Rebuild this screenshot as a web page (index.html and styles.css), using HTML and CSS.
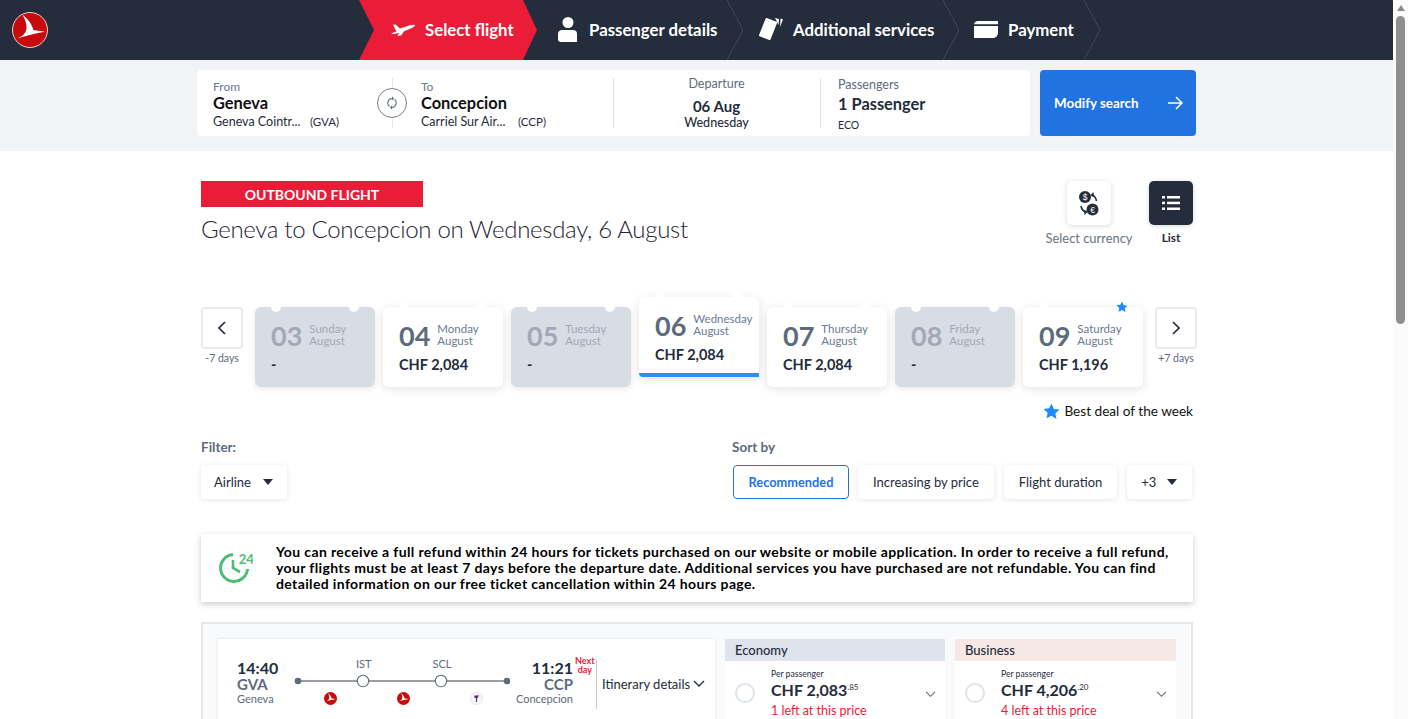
FILE: index.html
```html
<!DOCTYPE html>
<html lang="en">
<head>
  <meta charset="UTF-8" />
  <title>Select flight</title>
  <link rel="stylesheet" href="styles.css">
</head>
<body>
<div class="page">
  <div class="content">

    <header class="topbar">
      <div class="logo">
        <svg width="36" height="36" viewBox="0 0 36 36">
          <circle cx="18" cy="18" r="17.500" fill="#c70a0c" stroke="#d9d9d9"/>
          <path d="M10.700 3C16 7 20 12 21.300 18L33 19.700C26 21 16 23 5.300 26.500C11 24 14 21 14.500 16C14.800 12 13 7 10.700 3z" fill="#fff"/>
        </svg>
      </div>
      <nav class="steps">
        <div class="step step-active">
          <svg width="24" height="12" viewBox="0 0 24 12"><path d="M2 .8L4.500 .5L9 4.500L18 1.500C20.500 .7 24 .5 24 1.500C24 2.500 21 4 18 5.200L13 7.200L10 11.500L6.500 12L8 8.800C5 9.800 2 10.300 0 10L2.500 8.500L5.500 7.500z" fill="#fff"/></svg>
          <span>Select flight</span>
        </div>
        <div class="step step-2">
          <svg width="19" height="25" viewBox="0 0 19 25"><circle cx="10" cy="5.500" r="5.500" fill="#fff"/><path d="M4 13h11c2 0 4 1 4 3.500V25H3c-2 0-3-1-3-3v-5c0-3 2-4 4-4z" fill="#fff"/></svg>
          <span>Passenger details</span>
        </div>
        <div class="step step-3">
          <svg width="24" height="25" viewBox="0 0 24 25"><path d="M7.500 2L17 5.800L10.700 22L1 18.300z" fill="#fff" stroke="#fff" stroke-width="2" stroke-linejoin="round"/><path d="M16 1L20 2L19.500 8zM21.500 1.500L24 2.500L21 10z" fill="#fff"/></svg>
          <span>Additional services</span>
        </div>
        <div class="step step-4">
          <svg width="24" height="17" viewBox="0 0 24 17"><path d="M4 0h20v3.300H0C0 1.500 2 0 4 0zM0 5h24v6.500c0 3-2 5.500-5 5.500H0z" fill="#fff"/></svg>
          <span>Payment</span>
        </div>
      </nav>
    </header>

    <section class="search-band">
      <div class="search-card">
        <div class="search-col col-from">
          <div class="label">From</div>
          <div class="city">Geneva</div>
          <div class="airport"><span class="airport-name">Geneva Cointr...</span><span class="airport-code">(GVA)</span></div>
          <div class="swap">
            <svg width="10" height="14" viewBox="0 0 10 14" fill="none" stroke="#5d6b7d" stroke-width="1.100"><path d="M5 2.500A4.500 4.500 0 0 0 2.500 10.500M5 11.500A4.500 4.500 0 0 0 7.500 3.500"/><path d="M5 .5v4l2-2zM5 9.500v4l-2-2z" fill="#5d6b7d" stroke="none"/></svg>
          </div>
        </div>
        <div class="search-col col-to">
          <div class="label">To</div>
          <div class="city">Concepcion</div>
          <div class="airport"><span class="airport-name">Carriel Sur Air...</span><span class="airport-code">(CCP)</span></div>
        </div>
        <div class="search-col col-date">
          <div class="label-grey">Departure</div>
          <div class="date">06 Aug</div>
          <div class="weekday">Wednesday</div>
        </div>
        <div class="search-col col-pax">
          <div class="label-grey">Passengers</div>
          <div class="pax">1 Passenger</div>
          <div class="cabin">ECO</div>
        </div>
      </div>
      <a class="modify-btn">
        <span>Modify search</span>
        <svg width="16" height="14" viewBox="0 0 16 14" fill="none" stroke="#fff" stroke-width="1.500"><path d="M1 7h14M9 1l6 6-6 6"/></svg>
      </a>
    </section>

    <main class="main">
      <div class="heading-row">
        <div>
          <div class="badge">OUTBOUND FLIGHT</div>
          <h1>Geneva to Concepcion on Wednesday, 6 August</h1>
        </div>
        <div class="view-tools">
          <div class="tool tool-currency">
            <div class="tool-box">
              <svg width="20" height="25" viewBox="0 0 20 25">
                <circle cx="6" cy="6" r="6" fill="#252c3b"/>
                <circle cx="13.500" cy="18.500" r="6" fill="#252c3b"/>
                <text x="6" y="9" font-size="8.500" fill="#fff" text-anchor="middle" font-family="Liberation Sans">$</text>
                <text x="13.500" y="21.500" font-size="8.500" fill="#fff" text-anchor="middle" font-family="Liberation Sans">€</text>
                <path d="M13 4Q16.500 5 17.500 10M7 21Q3 20 2 15" fill="none" stroke="#252c3b" stroke-width="1.600"/>
                <path d="M14.500 1L11 4.500L15 6zM5.500 24L9 20.500L5 19z" fill="#252c3b"/>
              </svg>
            </div>
            <span>Select currency</span>
          </div>
          <div class="tool tool-list">
            <div class="tool-box dark">
              <svg width="18" height="16" viewBox="0 0 18 16" fill="#fff">
                <rect x="0" y="1" width="3" height="2.500"/><rect x="5" y="1" width="13" height="2.500"/>
                <rect x="0" y="6.700" width="3" height="2.500"/><rect x="5" y="6.700" width="13" height="2.500"/>
                <rect x="0" y="12.500" width="3" height="2.500"/><rect x="5" y="12.500" width="13" height="2.500"/>
              </svg>
            </div>
            <span>List</span>
          </div>
        </div>
      </div>

      <div class="calendar">
        <div class="cal-nav">
          <div class="cal-arrow"><svg width="10" height="14" viewBox="0 0 10 14" fill="none" stroke="#252c3b" stroke-width="1.700"><path d="M8 1L2 7l6 6"/></svg></div>
          <span>-7 days</span>
        </div>
        <div class="day off"><i class="hole h1"></i><i class="hole h2"></i>
          <div class="day-top"><b>03</b><div class="day-name">Sunday<br>August</div></div><div class="price">-</div></div>
        <div class="day"><i class="hole h1"></i><i class="hole h2"></i>
          <div class="day-top"><b>04</b><div class="day-name">Monday<br>August</div></div><div class="price">CHF 2,084</div></div>
        <div class="day off"><i class="hole h1"></i><i class="hole h2"></i>
          <div class="day-top"><b>05</b><div class="day-name">Tuesday<br>August</div></div><div class="price">-</div></div>
        <div class="day active"><i class="hole h1"></i><i class="hole h2"></i>
          <div class="day-top"><b>06</b><div class="day-name">Wednesday<br>August</div></div><div class="price">CHF 2,084</div></div>
        <div class="day"><i class="hole h1"></i><i class="hole h2"></i>
          <div class="day-top"><b>07</b><div class="day-name">Thursday<br>August</div></div><div class="price">CHF 2,084</div></div>
        <div class="day off"><i class="hole h1"></i><i class="hole h2"></i>
          <div class="day-top"><b>08</b><div class="day-name">Friday<br>August</div></div><div class="price">-</div></div>
        <div class="day"><i class="hole h1"></i>
          <svg class="day-star" width="12" height="12" viewBox="0 0 24 24"><path d="M12 1l3.400 7.300 7.900 1-5.800 5.500 1.500 7.900L12 18l-7 3.700 1.500-7.900L.7 8.300l7.900-1z" fill="#1a8cff"/></svg>
          <div class="day-top"><b>09</b><div class="day-name">Saturday<br>August</div></div><div class="price">CHF 1,196</div></div>
        <div class="cal-nav next">
          <div class="cal-arrow"><svg width="10" height="14" viewBox="0 0 10 14" fill="none" stroke="#252c3b" stroke-width="1.700"><path d="M2 1l6 6-6 6"/></svg></div>
          <span>+7 days</span>
        </div>
      </div>

      <div class="best-deal">
        <svg width="17" height="17" viewBox="0 0 24 24"><path d="M12 1l3.400 7.300 7.900 1-5.800 5.500 1.500 7.900L12 18l-7 3.700 1.500-7.900L.7 8.300l7.900-1z" fill="#1a8cff"/></svg>
        <span>Best deal of the week</span>
      </div>

      <div class="filter-row">
        <div class="filter-group">
          <div class="group-label">Filter:</div>
          <div class="pill-row">
            <div class="pill pill-airline">Airline <i class="caret"></i></div>
          </div>
        </div>
        <div class="filter-group">
          <div class="group-label">Sort by</div>
          <div class="pill-row">
            <div class="pill pill-on">Recommended</div>
            <div class="pill">Increasing by price</div>
            <div class="pill">Flight duration</div>
            <div class="pill pill-more">+3 <i class="caret"></i></div>
          </div>
        </div>
      </div>

      <div class="notice">
        <svg width="34" height="32" viewBox="0 0 34 32" fill="none">
          <path d="M14 2.500A13.500 13.500 0 1 0 28.500 17" stroke="#4dbd74" stroke-width="3"/>
          <path d="M14 8v8l7 4" stroke="#4dbd74" stroke-width="2.600"/>
          <text x="19.700" y="11.500" font-size="13" font-weight="700" fill="#4dbd74" font-family="Lato">24</text>
        </svg>
        <p>You can receive a full refund within 24 hours for tickets purchased on our website or mobile application. In order to receive a full refund, your flights must be at least 7 days before the departure date. Additional services you have purchased are not refundable. You can find detailed information on our free ticket cancellation within 24 hours page.</p>
      </div>

      <div class="results">
        <div class="flight">
          <div class="end">
            <div class="time">14:40</div>
            <div class="code">GVA</div>
            <div class="place">Geneva</div>
          </div>
          <div class="route">
            <div class="stops"><span>IST</span><span>SCL</span></div>
            <svg class="route-line" width="216" height="20" viewBox="0 0 216 20">
              <path d="M4 10h209" stroke="#7a7f87" stroke-width="1.300"/>
              <circle cx="4" cy="10" r="3.300" fill="#5d6b7d"/>
              <circle cx="213" cy="10" r="3.300" fill="#5d6b7d"/>
              <circle cx="69" cy="10" r="5.700" fill="#fff" stroke="#5d6b7d" stroke-width="1.100"/>
              <circle cx="147" cy="10" r="5.700" fill="#fff" stroke="#5d6b7d" stroke-width="1.100"/>
            </svg>
            <div class="carriers">
              <svg width="13" height="13" viewBox="0 0 36 36"><circle cx="18" cy="18" r="18" fill="#c70a0c"/><path d="M10.700 3C16 7 20 12 21.300 18L33 19.700C26 21 16 23 5.300 26.500C11 24 14 21 14.500 16C14.800 12 13 7 10.700 3z" fill="#fff"/></svg>
              <svg width="13" height="13" viewBox="0 0 36 36"><circle cx="18" cy="18" r="18" fill="#c70a0c"/><path d="M10.700 3C16 7 20 12 21.300 18L33 19.700C26 21 16 23 5.300 26.500C11 24 14 21 14.500 16C14.800 12 13 7 10.700 3z" fill="#fff"/></svg>
              <svg width="13" height="13" viewBox="0 0 36 36"><circle cx="18" cy="18" r="17" fill="#f7f5f8" stroke="#e3e0e6" stroke-width="2"/><path d="M12 10h12l-4 8-1 10h-3l1-11-5-1z" fill="#4b2a8c"/><path d="M19 10h6l-4 6z" fill="#e4173a"/></svg>
            </div>
          </div>
          <div class="end end-right">
            <div class="time-row"><div class="time">11:21</div><div class="next-day">Next<br>day</div></div>
            <div class="code">CCP</div>
            <div class="place">Concepcion</div>
          </div>
          <div class="itinerary">
            <span>Itinerary details</span>
            <svg width="12" height="8" viewBox="0 0 12 8" fill="none" stroke="#252c3b" stroke-width="1.300"><path d="M1 1l5 5 5-5"/></svg>
          </div>
        </div>

        <div class="fare">
          <div class="fare-head economy">Economy</div>
          <div class="fare-body">
            <i class="radio"></i>
            <div class="fare-info">
              <div class="per">Per passenger</div>
              <div class="amount">CHF 2,083<sup>.85</sup></div>
              <div class="left">1 left at this price</div>
            </div>
            <svg class="fare-chevron" width="11" height="7" viewBox="0 0 12 8" fill="none" stroke="#5d6b7d" stroke-width="1.200"><path d="M1 1l5 5 5-5"/></svg>
          </div>
        </div>
        <div class="fare fare-wide">
          <div class="fare-head business">Business</div>
          <div class="fare-body">
            <i class="radio"></i>
            <div class="fare-info">
              <div class="per">Per passenger</div>
              <div class="amount">CHF 4,206<sup>.20</sup></div>
              <div class="left">4 left at this price</div>
            </div>
            <svg class="fare-chevron" width="11" height="7" viewBox="0 0 12 8" fill="none" stroke="#5d6b7d" stroke-width="1.200"><path d="M1 1l5 5 5-5"/></svg>
          </div>
        </div>
      </div>
    </main>
  </div>

  <aside class="scrollbar">
    <i class="scroll-up"></i>
    <div class="scroll-thumb"></div>
  </aside>
</div>
</body>
</html>
```

FILE: styles.css
```css
* {
  box-sizing: border-box;
}
html, body {
  margin: 0;
  padding: 0;
  height: 719px;
  overflow: hidden;
}
body {
  font-family: "Lato", "Noto Sans", sans-serif;
  color: #252c3b;
  background: #fff;
}
.page {
  display: flex;
  height: 719px;
  overflow: hidden;
}
.content {
  width: 1393px;
  flex: none;
}

/* top bar */
.topbar {
  height: 60px;
  background: #252c3b;
  display: flex;
}
.logo {
  width: 359px;
  padding: 12px 0 0 12px;
}
.steps {
  display: flex;
  height: 60px;
}
.step {
  position: relative;
  display: flex;
  align-items: center;
  height: 60px;
  padding-bottom: 1px;
  color: #fff;
  font-size: 16.800px;
  font-weight: 700;
  white-space: nowrap;
}
.step::after {
  content: "";
  position: absolute;
  top: 0;
  right: -16px;
  width: 16px;
  height: 60px;
  background:
    linear-gradient(to top right, transparent calc(50% - .6px), #4a5263 50%, transparent calc(50% + .6px)) top / 100% 50% no-repeat,
    linear-gradient(to bottom right, transparent calc(50% - .6px), #4a5263 50%, transparent calc(50% + .6px)) bottom / 100% 50% no-repeat;
}
.step-active {
  width: 164px;
  padding-left: 32px;
  gap: 10px;
  background: #eb1c37;
}
.step-active::before {
  content: "";
  position: absolute;
  left: 0;
  top: 0;
  border-left: 15px solid #252c3b;
  border-top: 30px solid transparent;
  border-bottom: 30px solid transparent;
}
.step-active::after {
  background: #eb1c37;
  clip-path: polygon(0 0, 100% 50%, 0 100%);
  right: -14px;
  width: 14px;
}
.step-2 {
  width: 204px;
  padding-left: 35px;
  gap: 12px;
}
.step-3 {
  width: 216px;
  padding-left: 32px;
  gap: 10px;
}
.step-4 {
  width: 141px;
  padding-left: 31px;
  gap: 10px;
}

/* search summary */
.search-band {
  height: 91px;
  background: #f2f3f7;
  padding: 10px 0 0 197px;
  display: flex;
  gap: 10px;
  align-items: flex-start;
}
.search-card {
  width: 833px;
  height: 66px;
  background: #fff;
  border-radius: 4px;
  display: flex;
}
.search-col {
  position: relative;
  height: 66px;
  flex: none;
}
.col-from {
  width: 208px;
  padding: 10px 0 0 16px;
}
.col-from::after {
  content: "";
  position: absolute;
  left: 195px;
  top: 8px;
  bottom: 8px;
  border-left: 1px solid #e4e6ea;
}
.col-to {
  width: 208px;
  padding: 10px 0 0 16px;
}
.col-date {
  width: 207px;
  text-align: center;
  padding-top: 6px;
}
.col-date::before, .col-pax::before {
  content: "";
  position: absolute;
  left: 0;
  top: 8px;
  bottom: 8px;
  border-left: 1px solid #dfe1e6;
}
.col-pax {
  width: 210px;
  padding: 7px 0 0 18px;
}
.label {
  font-size: 12px;
  line-height: 13px;
  color: #6b7a90;
}
.city {
  font-size: 16.400px;
  line-height: 20px;
  font-weight: 700;
  color: #111;
}
.airport {
  display: flex;
  margin-top: 1px;
  font-size: 12.500px;
  line-height: 16px;
  color: #252c3b;
}
.airport-name {
  width: 97px;
  white-space: nowrap;
}
.airport-code {
  font-size: 11.500px;
}
.swap {
  position: absolute;
  z-index: 1;
  left: 180px;
  top: 18px;
  width: 30px;
  height: 30px;
  border: 1px solid #77808e;
  border-radius: 50%;
  background: #fff;
  display: flex;
  align-items: center;
  justify-content: center;
}
.label-grey {
  font-size: 12.500px;
  line-height: 16px;
  color: #5d6b7d;
}
.date {
  margin-top: 6px;
  font-size: 15px;
  line-height: 17px;
  font-weight: 700;
}
.weekday {
  font-size: 12.500px;
  line-height: 15px;
  font-weight: 500;
}
.pax {
  margin-top: 1px;
  font-size: 16.400px;
  line-height: 20px;
  font-weight: 700;
}
.cabin {
  margin-top: 4px;
  font-size: 10.500px;
  line-height: 14px;
}
.modify-btn {
  width: 156px;
  height: 66px;
  background: #2273e2;
  border-radius: 4px;
  color: #fff;
  font-size: 13.400px;
  font-weight: 700;
  display: flex;
  align-items: center;
  justify-content: space-between;
  padding: 0 13px 0 14px;
}

/* main column */
.main {
  width: 992px;
  margin-left: 201px;
  padding-top: 30px;
}
.heading-row {
  display: flex;
  justify-content: space-between;
  height: 126px;
}
.badge {
  width: 222px;
  height: 26px;
  line-height: 27px;
  background: #eb1c37;
  color: #fff;
  font-size: 14px;
  font-weight: 700;
  text-align: center;
}
h1 {
  margin: 6px 0 0;
  font-size: 24px;
  line-height: 32px;
  font-weight: 300;
  letter-spacing: -.3px;
  color: #1d2433;
}
.view-tools {
  position: relative;
  display: flex;
  height: 70px;
  width: 126px;
  justify-content: space-between;
}
.tool {
  width: 44px;
  font-size: 12.900px;
  color: #6b7380;
  display: flex;
  flex-direction: column;
  align-items: center;
  white-space: nowrap;
  gap: 5px;
}
.tool-list {
  color: #252c3b;
  font-weight: 700;
  font-size: 11.800px;
}
.tool-box {
  width: 44px;
  height: 44px;
  background: #fff;
  border-radius: 5px;
  box-shadow: 0 1px 5px rgba(37, 44, 59, .18);
  display: flex;
  align-items: center;
  justify-content: center;
  flex: none;
}
.tool-box.dark {
  background: #252c3b;
}

/* date strip */
.calendar {
  display: flex;
  gap: 8px;
  height: 90px;
  align-items: flex-start;
}
.cal-nav {
  width: 42px;
  margin-right: 4px;
  font-size: 10.500px;
  color: #5d6b7d;
  text-align: center;
  white-space: nowrap;
}
.cal-nav.next {
  margin: 0 0 0 4px;
}
.cal-arrow {
  width: 42px;
  height: 42px;
  border: 2px solid #e8eaf0;
  border-radius: 4px;
  display: flex;
  align-items: center;
  justify-content: center;
  margin-bottom: 3px;
}
.day {
  position: relative;
  width: 120px;
  height: 80px;
  background: #fff;
  border-radius: 6px;
  box-shadow: 0 2px 8px rgba(37, 44, 59, .14);
  padding: 13px 16px 0;
  flex: none;
}
.day.off {
  background: #d8dce5;
  box-shadow: 0 2px 6px rgba(37, 44, 59, .1);
}
.day.active {
  transform: translateY(-10px);
  border-radius: 6px 6px 0 4px;
  border-bottom: 4px solid #2d8cff;
}
.hole {
  position: absolute;
  top: -5px;
  width: 10px;
  height: 10px;
  background: #fff;
  border-radius: 50%;
}
.h1 {
  left: 16px;
}
.h2 {
  left: 94px;
}
.day-star {
  position: absolute;
  top: -6px;
  left: 93px;
}
.day-top {
  display: flex;
  align-items: center;
  gap: 7px;
  height: 30px;
  white-space: nowrap;
}
.day-top b {
  font-size: 27px;
  font-weight: 700;
  color: #5d6b7d;
}
.day-name {
  font-size: 11.500px;
  line-height: 12px;
  color: #6b7a90;
}
.day.off b, .day.off .day-name {
  color: #a2a9b4;
}
.price {
  margin-top: 5px;
  font-size: 14.500px;
  line-height: 20px;
  font-weight: 700;
}

.best-deal {
  display: flex;
  justify-content: flex-end;
  align-items: center;
  gap: 4px;
  font-size: 13.600px;
  height: 20px;
  color: #111;
  margin-top: 4px;
}

/* filters */
.filter-row {
  display: flex;
  margin-top: 17px;
}
.filter-group:first-child {
  width: 531px;
}
.group-label {
  font-size: 13.500px;
  line-height: 18px;
  font-weight: 700;
  color: #5d6b7d;
  margin-bottom: 9px;
}
.pill-row {
  display: flex;
  gap: 10px;
}
.pill {
  height: 34px;
  padding: 0 15px;
  background: #fff;
  border-radius: 4px;
  box-shadow: 0 1px 5px rgba(37, 44, 59, .12);
  font-size: 13px;
  display: flex;
  align-items: center;
  white-space: nowrap;
}
.pill-airline {
  width: 86px;
  padding: 0 14px 0 13px;
  justify-content: space-between;
}
.pill-on {
  width: 116px;
  margin-left: 1px;
  margin-right: -1px;
  justify-content: center;
  padding: 0;
  border: 1px solid #2273e2;
  color: #2273e2;
  box-shadow: none;
  font-weight: 700;
  font-size: 12.800px;
}
.pill-more {
  width: 65px;
  justify-content: space-between;
  padding: 0 15px 0 14px;
}
.caret {
  width: 0;
  height: 0;
  border-left: 5.500px solid transparent;
  border-right: 5.500px solid transparent;
  border-top: 6px solid #252c3b;
}

/* refund notice */
.notice {
  margin-top: 35px;
  height: 68px;
  display: flex;
  align-items: center;
  gap: 23px;
  padding: 0 20px 0 18px;
  background: #fff;
  box-shadow: 0 2px 6px rgba(37, 44, 59, .25);
}
.notice svg {
  flex: none;
}
.notice p {
  margin: 0;
  font-size: 14px;
  letter-spacing: .37px;
  line-height: 16px;
  font-weight: 700;
  color: #000;
}

/* flight result */
.results {
  margin-top: 20px;
  height: 120px;
  background: #f9fafc;
  border: 2px solid #e5e7ea;
  padding: 15px 15px 0;
  display: flex;
  gap: 10px;
  align-items: flex-start;
}
.flight {
  width: 497px;
  height: 100px;
  background: #fff;
  box-shadow: 0 0 3px rgba(37, 44, 59, .12);
  display: flex;
  padding: 20px 0 0 19px;
  position: relative;
}
.end {
  width: 57px;
  flex: none;
}
.end-right {
  width: 78px;
  text-align: right;
  padding-right: 20px;
  position: relative;
}
.time {
  font-size: 16px;
  line-height: 17px;
  font-weight: 700;
}
.time-row {
  display: flex;
  justify-content: flex-end;
}
.next-day {
  position: absolute;
  left: 60px;
  top: -3px;
  font-size: 9px;
  line-height: 9px;
  font-weight: 700;
  color: #eb1c37;
  text-align: center;
}
.code {
  font-size: 15px;
  line-height: 16px;
  font-weight: 700;
  color: #5d6b7d;
}
.place {
  font-size: 11px;
  line-height: 14px;
  color: #5d6b7d;
}
.route {
  width: 221px;
  flex: none;
  margin: -2px 0 0;
}
.stops {
  display: flex;
  font-size: 11px;
  line-height: 14px;
  color: #5d6b7d;
  padding-left: 62px;
  gap: 61px;
}
.route-line {
  display: block;
  margin: 0;
}
.carriers {
  display: flex;
  gap: 60px;
  padding-left: 30px;
  margin-top: 1px;
}
.itinerary {
  position: absolute;
  left: 378px;
  top: 20px;
  height: 50px;
  width: 119px;
  border-left: 1px solid #c9ccd2;
  padding-left: 5px;
  display: flex;
  align-items: center;
  gap: 3px;
  font-size: 13px;
  white-space: nowrap;
}

/* fare columns */
.fare {
  width: 220px;
  flex: none;
}
.fare-wide {
  width: 221px;
}
.fare-head {
  height: 22px;
  line-height: 22px;
  padding-left: 10px;
  font-size: 13px;
  font-weight: 500;
}
.economy {
  background: #dfe3ec;
}
.business {
  background: #f6e8e4;
}
.fare-body {
  height: 78px;
  background: #fff;
  position: relative;
  display: flex;
  padding: 8px 0 0 10px;
}
.radio {
  width: 20px;
  height: 20px;
  border: 2px solid #dfe3ec;
  border-radius: 50%;
  margin-top: 14px;
  flex: none;
}
.fare-info {
  margin-left: 16px;
}
.per {
  font-size: 8.600px;
  line-height: 11px;
  color: #252c3b;
}
.amount {
  font-size: 16px;
  line-height: 20px;
  font-weight: 700;
  white-space: nowrap;
}
.amount sup {
  font-size: 8px;
  line-height: 0;
  font-weight: 400;
}
.left {
  margin-top: 3px;
  font-size: 12.500px;
  line-height: 15px;
  color: #eb1c37;
}
.fare-chevron {
  position: absolute;
  right: 9px;
  top: 30px;
}

/* scrollbar */
.scrollbar {
  width: 15px;
  height: 719px;
  background: #fbfbfb;
  padding: 5px 3px 0;
  flex: none;
}
.scroll-up {
  display: block;
  width: 0;
  height: 0;
  margin: 0 auto 5px;
  border-left: 4.500px solid transparent;
  border-right: 4.500px solid transparent;
  border-bottom: 6px solid #8a8a8a;
}
.scroll-thumb {
  width: 9px;
  height: 308px;
  background: #8f8f8f;
  border-radius: 5px;
}
```
